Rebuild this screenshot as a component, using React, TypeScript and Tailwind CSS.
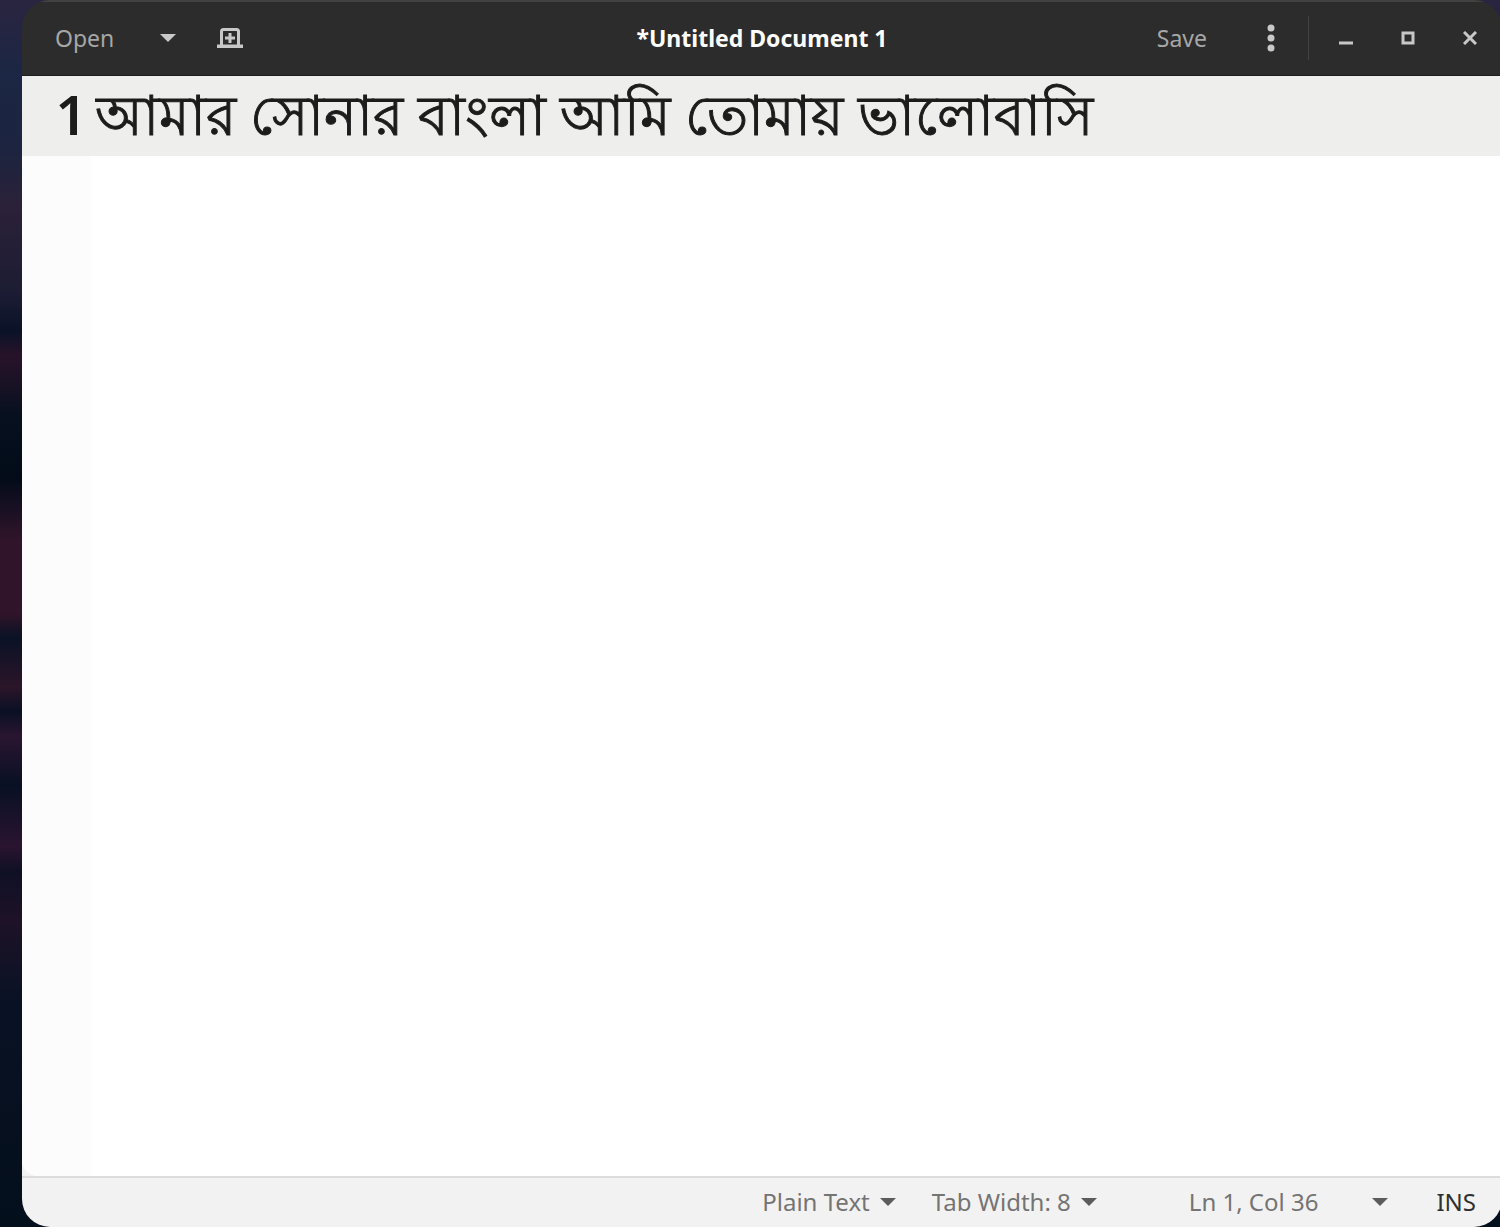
import { type ReactNode } from 'react';

function Caret({ className }: { className?: string }) {
  return (
    <svg width="16" height="8" viewBox="0 0 16 8" className={className} aria-hidden="true">
      <path d="M0 0h16L8 8z" fill="currentColor" />
    </svg>
  );
}

function NewTabIcon() {
  return (
    <svg width="28" height="22" viewBox="0 0 28 22" fill="none" aria-hidden="true">
      <path d="M5.5 18V4.5a2 2 0 0 1 2-2h13a2 2 0 0 1 2 2V18" stroke="currentColor" strokeWidth="3" />
      <path d="M1 17.5h26V21H1z" fill="currentColor" />
      <path d="M14 6v10M9 11h10" stroke="currentColor" strokeWidth="3" />
    </svg>
  );
}

function MenuIcon() {
  return (
    <svg width="8" height="28" viewBox="0 0 8 28" fill="currentColor" aria-hidden="true">
      <circle cx="4" cy="4" r="3.5" />
      <circle cx="4" cy="14" r="3.5" />
      <circle cx="4" cy="24" r="3.5" />
    </svg>
  );
}

function WindowButton({ label, children }: { label: string; children: ReactNode }) {
  return (
    <button type="button" aria-label={label} className="flex h-10 w-10 items-center justify-center">
      <svg width="14" height="14" viewBox="0 0 14 14" fill="none" stroke="currentColor" strokeWidth="3" aria-hidden="true">
        {children}
      </svg>
    </button>
  );
}

function HeaderBar() {
  return (
    <header className="grid h-19 grid-cols-[1fr_auto_1fr] items-center border-t-2 border-b border-t-[#424242] border-b-[#1c1c1c] bg-[#2c2c2c] pb-[2px] text-[#c8c8c8]">
      <div className="flex items-center">
        <button type="button" className="pl-[33px] text-[#a6a6a6]">Open</button>
        <button type="button" aria-label="Open a recent file" className="ml-8 flex h-10 w-11 items-center justify-center">
          <Caret />
        </button>
        <button type="button" aria-label="New tab" className="ml-3 flex h-10 w-14 items-center justify-center">
          <NewTabIcon />
        </button>
      </div>

      <h1 className="font-bold text-white">*Untitled Document 1</h1>

      <div className="flex items-center justify-end pr-3">
        <button type="button" className="text-[#a6a6a6]">Save</button>
        <button type="button" aria-label="Menu" className="ml-11 flex h-10 w-10 items-center justify-center">
          <MenuIcon />
        </button>
        <div className="mr-[17px] ml-[17px] h-11 w-px bg-[#444444]" />
        <div className="flex gap-[22px]">
          <WindowButton label="Minimize">
            <path d="M0 12h14" />
          </WindowButton>
          <WindowButton label="Maximize">
            <path d="M2 2h10v10H2z" />
          </WindowButton>
          <WindowButton label="Close">
            <path d="M1 1l12 12M13 1L1 13" />
          </WindowButton>
        </div>
      </div>
    </header>
  );
}

function Editor() {
  return (
    <main className="flex flex-1 flex-col bg-[#f2f2f2]">
      {/* Current line */}
      <div className="flex h-20 items-center bg-[#eeeeec] pb-1 text-[55px] leading-19 text-[#1c1c1c]">
        <label htmlFor="line-1" className="w-[69px] pr-1 text-right font-semibold">1</label>
        <input
          id="line-1"
          type="text"
          spellCheck={false}
          defaultValue="আমার সোনার বাংলা আমি তোমায় ভালোবাসি"
          className="h-19 min-w-0 flex-1 bg-transparent pl-1 font-medium outline-none [-webkit-text-stroke:1px_#1c1c1c]"
        />
      </div>
      {/* Gutter and empty page */}
      <div className="flex flex-1 overflow-hidden rounded-bl-2xl bg-white">
        <div className="w-[69px] bg-[#fcfcfc]" />
      </div>
    </main>
  );
}

function StatusBar() {
  return (
    <footer className="flex h-[51px] items-center justify-end border-t-2 border-[#dcdcdc] bg-[#f2f2f2] pr-[26px] pb-[2px] text-[24px] text-[#747474]">
      <button type="button" className="flex items-center gap-[10px]">
        Plain Text
        <Caret className="text-[#5c5c5c]" />
      </button>
      <button type="button" className="ml-9 flex items-center gap-[10px]">
        Tab Width: 8
        <Caret className="text-[#5c5c5c]" />
      </button>
      <button type="button" className="ml-[92px] flex items-center gap-[54px]">
        Ln 1, Col 36
        <Caret className="text-[#5c5c5c]" />
      </button>
      <span className="ml-12 text-[#303030]">INS</span>
    </footer>
  );
}

export default function App() {
  return (
    <div className="flex min-h-screen overflow-hidden bg-[#030b18] bg-[linear-gradient(to_bottom,#2a2440_0%,#1b2744_6%,#1c2440_12%,#2b2138_17%,#1b1c33_24%,#0a1228_27%,#281329_29%,#06101f_34%,#030b18_39%,#150f22_41%,#301429_44%,#301429_50%,#0a1225_52%,#2b1529_56%,#0a1024_58%,#2a1530_60%,#081024_64%,#2a1430_69%,#0f1024_71%,#1e1228_75%,#081224_82%,#040f1c_100%)] font-['Noto_Sans',sans-serif] text-[23px] leading-8">
      <div className="-mr-[2px] ml-[22px] flex flex-1 flex-col overflow-hidden rounded-[28px]">
        <HeaderBar />
        <Editor />
        <StatusBar />
      </div>
    </div>
  );
}
